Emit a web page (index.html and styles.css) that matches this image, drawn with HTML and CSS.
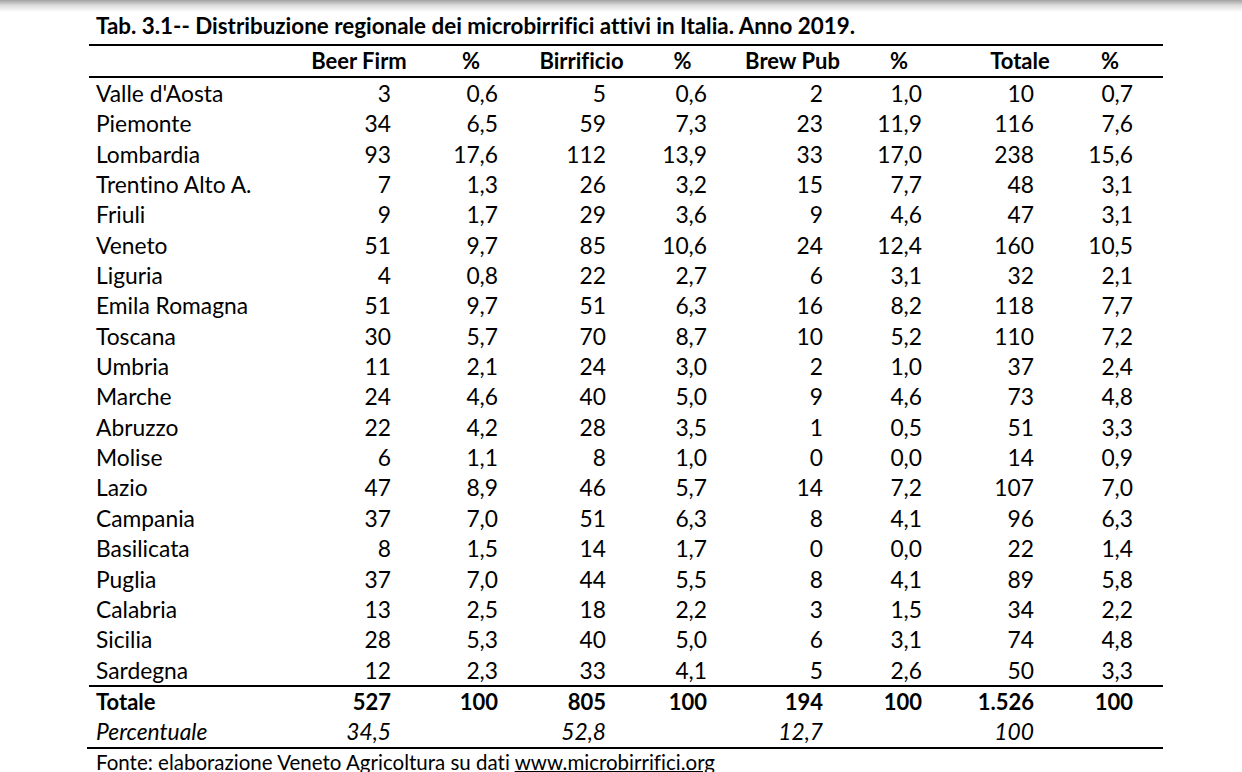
FILE: index.html
```html
<!DOCTYPE html>
<html lang="it">
<head>
<meta charset="utf-8">
<title>Tab. 3.1</title>
<link rel="stylesheet" href="styles.css">
</head>
<body>
<div class="shade"></div>
<div class="sheet">
  <div class="title">Tab. 3.1-- Distribuzione regionale dei microbirrifici attivi in Italia. Anno 2019.</div>
  <div class="rule"></div>
  <div class="row head">
    <div class="label"></div>
    <div class="hc h1">Beer Firm</div>
    <div class="hc h2">%</div>
    <div class="hc h3">Birrificio</div>
    <div class="hc h4">%</div>
    <div class="hc h5">Brew Pub</div>
    <div class="hc h6">%</div>
    <div class="hc h7">Totale</div>
    <div class="hc h8">%</div>
  </div>
  <div class="rule"></div>
  <div class="body">
    <div class="row"><div class="label">Valle d'Aosta</div><div>3</div><div>0,6</div><div>5</div><div>0,6</div><div>2</div><div>1,0</div><div>10</div><div>0,7</div></div>
    <div class="row"><div class="label">Piemonte</div><div>34</div><div>6,5</div><div>59</div><div>7,3</div><div>23</div><div>11,9</div><div>116</div><div>7,6</div></div>
    <div class="row"><div class="label">Lombardia</div><div>93</div><div>17,6</div><div>112</div><div>13,9</div><div>33</div><div>17,0</div><div>238</div><div>15,6</div></div>
    <div class="row"><div class="label">Trentino Alto A.</div><div>7</div><div>1,3</div><div>26</div><div>3,2</div><div>15</div><div>7,7</div><div>48</div><div>3,1</div></div>
    <div class="row"><div class="label">Friuli</div><div>9</div><div>1,7</div><div>29</div><div>3,6</div><div>9</div><div>4,6</div><div>47</div><div>3,1</div></div>
    <div class="row"><div class="label">Veneto</div><div>51</div><div>9,7</div><div>85</div><div>10,6</div><div>24</div><div>12,4</div><div>160</div><div>10,5</div></div>
    <div class="row"><div class="label">Liguria</div><div>4</div><div>0,8</div><div>22</div><div>2,7</div><div>6</div><div>3,1</div><div>32</div><div>2,1</div></div>
    <div class="row"><div class="label">Emila Romagna</div><div>51</div><div>9,7</div><div>51</div><div>6,3</div><div>16</div><div>8,2</div><div>118</div><div>7,7</div></div>
    <div class="row"><div class="label">Toscana</div><div>30</div><div>5,7</div><div>70</div><div>8,7</div><div>10</div><div>5,2</div><div>110</div><div>7,2</div></div>
    <div class="row"><div class="label">Umbria</div><div>11</div><div>2,1</div><div>24</div><div>3,0</div><div>2</div><div>1,0</div><div>37</div><div>2,4</div></div>
    <div class="row"><div class="label">Marche</div><div>24</div><div>4,6</div><div>40</div><div>5,0</div><div>9</div><div>4,6</div><div>73</div><div>4,8</div></div>
    <div class="row"><div class="label">Abruzzo</div><div>22</div><div>4,2</div><div>28</div><div>3,5</div><div>1</div><div>0,5</div><div>51</div><div>3,3</div></div>
    <div class="row"><div class="label">Molise</div><div>6</div><div>1,1</div><div>8</div><div>1,0</div><div>0</div><div>0,0</div><div>14</div><div>0,9</div></div>
    <div class="row"><div class="label">Lazio</div><div>47</div><div>8,9</div><div>46</div><div>5,7</div><div>14</div><div>7,2</div><div>107</div><div>7,0</div></div>
    <div class="row"><div class="label">Campania</div><div>37</div><div>7,0</div><div>51</div><div>6,3</div><div>8</div><div>4,1</div><div>96</div><div>6,3</div></div>
    <div class="row"><div class="label">Basilicata</div><div>8</div><div>1,5</div><div>14</div><div>1,7</div><div>0</div><div>0,0</div><div>22</div><div>1,4</div></div>
    <div class="row"><div class="label">Puglia</div><div>37</div><div>7,0</div><div>44</div><div>5,5</div><div>8</div><div>4,1</div><div>89</div><div>5,8</div></div>
    <div class="row"><div class="label">Calabria</div><div>13</div><div>2,5</div><div>18</div><div>2,2</div><div>3</div><div>1,5</div><div>34</div><div>2,2</div></div>
    <div class="row"><div class="label">Sicilia</div><div>28</div><div>5,3</div><div>40</div><div>5,0</div><div>6</div><div>3,1</div><div>74</div><div>4,8</div></div>
    <div class="row"><div class="label">Sardegna</div><div>12</div><div>2,3</div><div>33</div><div>4,1</div><div>5</div><div>2,6</div><div>50</div><div>3,3</div></div>
  </div>
  <div class="rule"></div>
  <div class="row total"><div class="label">Totale</div><div>527</div><div>100</div><div>805</div><div>100</div><div>194</div><div>100</div><div>1.526</div><div>100</div></div>
  <div class="row share"><div class="label">Percentuale</div><div>34,5</div><div></div><div>52,8</div><div></div><div>12,7</div><div></div><div>100</div><div></div></div>
  <div class="rule rule-wide"></div>
  <div class="source">Fonte: elaborazione Veneto Agricoltura su dati <span class="link">www.microbirrifici.org</span></div>
</div>
</body>
</html>
```

FILE: styles.css
```css
html, body {
  margin: 0;
  padding: 0;
  background: #fff;
}

body {
  font-family: Lato, "Liberation Sans", sans-serif;
  color: #000;
  overflow: hidden;
  font-variant-ligatures: none;
}

.shade {
  height: 12px;
  background: linear-gradient(#a2a2a2, #dcdcdc 45%, #ffffff);
}

.sheet {
  margin-left: 89px;
  width: 1074px;
}

.title {
  font-weight: 700;
  font-size: 22.4px;
  line-height: 28px;
  padding-left: 7px;
  margin-bottom: 4px;
  white-space: nowrap;
}

.rule {
  height: 2px;
  background: #000;
}

.rule-wide {
  margin-left: -2px;
}

.row {
  display: grid;
  grid-template-columns: 200px 102px 107px 108px 101px 116px 99px 112px 99px 30px;
  font-size: 22.8px;
  height: 30.35px;
  line-height: 30.35px;
  white-space: nowrap;
  text-align: right;
}

.row .label {
  text-align: left;
  padding-left: 7px;
}

.head {
  height: 30px;
  line-height: 30px;
  font-weight: 700;
  font-size: 22px;
}

.hc {
  text-align: center;
}

.h1 { margin-left: 10px;   margin-right: -28px; }
.h2 { margin-left: 20px;   margin-right: -33px; }
.h3 { margin-left: 23.5px; margin-right: -35.5px; }
.h4 { margin-left: 16.5px; margin-right: -35.5px; }
.h5 { margin-left: 25.5px; margin-right: -29.5px; }
.h6 { margin-left: 16px;   margin-right: -37px; }
.h7 { margin-left: 38px;   margin-right: -46px; }
.h8 { margin-left: 16px;   margin-right: -37px; }

.total {
  font-weight: 700;
  font-size: 22px;
  height: 29.5px;
  line-height: 29.5px;
}

.share {
  font-style: italic;
  height: 30.5px;
  line-height: 30.5px;
}

.source {
  font-size: 20.5px;
  line-height: 27px;
  padding-left: 7px;
  white-space: nowrap;
}

.link {
  text-decoration: underline;
  text-underline-offset: 1px;
}
```
